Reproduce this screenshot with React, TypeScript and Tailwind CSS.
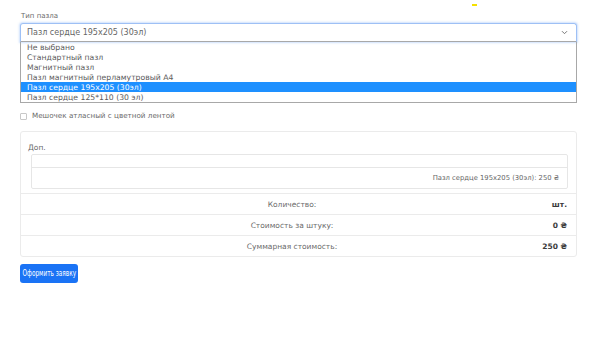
import React from "react";

const items = [
  "Не выбрано",
  "Стандартный пазл",
  "Магнитный пазл",
  "Пазл магнитный перламутровый А4",
  "Пазл сердце 195x205 (30эл)",
  "Пазл сердце 125*110 (30 эл)",
];

function Row({ label, value }: { label: string; value: string }) {
  return (
    <div className="flex h-[21px] items-center border-t border-[#ebebeb] text-[7.5px]">
      <div className="flex-1 pt-[1px] text-center text-[#6a6a6a]">{label}</div>
      <div className="flex w-[13px] justify-end whitespace-nowrap pr-[9px] pt-[1px] font-bold text-[#3a3a3a]">{value}</div>
    </div>
  );
}

export default function App() {
  return (
    <div className="relative h-[338px] w-[600px] overflow-hidden bg-white font-['DejaVu_Sans',sans-serif] text-[8px] text-[#555]">
      <div className="absolute left-[472px] top-[4px] h-[2px] w-[5px] bg-[#f5e000]" />
      <div className="pl-[20px] pr-[23px] pt-[11px]">
        <div className="h-[10px] pl-[1px] text-[7px] leading-[10px] text-[#6a6a6a]">Тип пазла</div>
        <div className="mt-[2px] flex h-[19px] items-center justify-between rounded-t-[3px] border border-[#9ec0f5] border-b-[#a8a8a8] px-[6px] shadow-[0_0_2px_1px_rgba(160,195,250,0.5)]">
          <span className="pt-[1px] text-[#666]">Пазл сердце 195x205 (30эл)</span>
          <svg width="7" height="5" viewBox="0 0 7 5" className="mr-[2px]">
            <path d="M1 1.2 L3.5 3.7 L6 1.2" fill="none" stroke="#777" strokeWidth="1" />
          </svg>
        </div>
        <div className="border border-t-0 border-[#a8a8a8]">
          {items.map((it, i) => (
            <div
              key={it}
              className={`h-[10px] overflow-hidden whitespace-nowrap px-[6px] pt-[1px] text-[7.7px] leading-[10px] ${
                i === 4 ? "bg-[#1e90ff] text-white" : "text-[#5a5a5a]"
              }`}
            >
              {it}
            </div>
          ))}
        </div>
        <div className="mt-[9px] flex h-[9px] items-center">
          <span className="h-[7px] w-[7px] rounded-[1px] border border-[#c8c8c8] bg-white" />
          <span className="ml-[5px] text-[7.2px] text-[#6a6a6a]">Мешочек атласный с цветной лентой</span>
        </div>
        <div className="mt-[10px] overflow-hidden rounded-[3px] border border-[#ebebeb]">
          <div className="px-[7px] pb-[4px] pt-[11px]">
            <div className="h-[10px] text-[7.5px] leading-[10px] text-[#6a6a6a]">Доп.</div>
            <div className="ml-[3px] mr-[1px] mt-[1px] rounded-[2px] border border-[#e6e6e6]">
              <div className="h-[13px] border-b border-[#e6e6e6]" />
              <div className="flex h-[20px] items-center justify-end pr-[8px] pt-[1px] text-[6.8px] text-[#666]">
                Пазл сердце 195x205 (30эл): 250 ₴
              </div>
            </div>
          </div>
          <Row label="Количество:" value="шт." />
          <Row label="Стоимость за штуку:" value="0 ₴" />
          <Row label="Суммарная стоимость:" value="250 ₴" />
        </div>
        <div className="mt-[7px] flex h-[19px] w-[58px] items-center justify-center rounded-[3px] bg-[#1a73f5] text-white">
          <span className="inline-block scale-x-[0.72] whitespace-nowrap text-[8px]">Оформить заявку</span>
        </div>
      </div>
    </div>
  );
}
